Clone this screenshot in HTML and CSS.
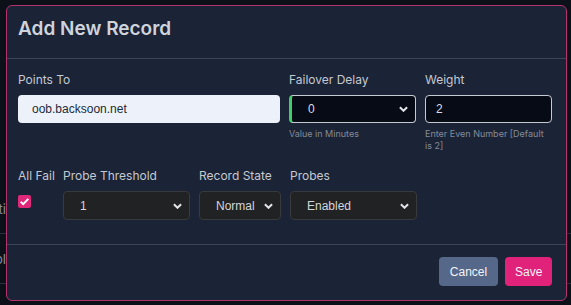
FILE: index.html
```html
<!DOCTYPE html>
<html lang="en">
<head>
    <meta charset="UTF-8">
    <title>Add New Record</title>
    <link rel="stylesheet" href="styles.css">
</head>
<body>
    <div class="page">
        <div class="bg-row"><span class="bg-edge">Multi</span></div>
        <div class="bg-row"><span class="bg-edge">Pool</span></div>
        <div class="bg-row bg-last"><span class="bg-cell">TRAFFIC CONTROLLER</span><span class="bg-cell bg-right">Enabled</span></div>
    </div>

    <div class="modal">
        <div class="modal-header">
            <h2>Add New Record</h2>
        </div>

        <div class="modal-body">
            <div class="form-row">
                <div class="field field-wide">
                    <label>Points To</label>
                    <input class="input input-light" type="text" value="oob.backsoon.net">
                </div>
                <div class="field field-md">
                    <label>Failover Delay</label>
                    <div class="select select-dark select-ok">
                        <span>0</span>
                        <svg class="chev" viewBox="0 0 10 6"><path d="M1 1l4 4 4-4"/></svg>
                    </div>
                    <small>Value in Minutes</small>
                </div>
                <div class="field field-md">
                    <label>Weight</label>
                    <input class="input input-dark" type="text" value="2">
                    <small>Enter Even Number [Default is 2]</small>
                </div>
            </div>

            <div class="form-row row-two">
                <div class="field field-check">
                    <label>All Fail</label>
                    <span class="checkbox">
                        <svg viewBox="0 0 12 12"><path d="M2.5 6.2l2.3 2.2 4.7-4.8"/></svg>
                    </span>
                </div>
                <div class="field field-md">
                    <label>Probe Threshold</label>
                    <div class="select select-gray">
                        <span>1</span>
                        <svg class="chev" viewBox="0 0 10 6"><path d="M1 1l4 4 4-4"/></svg>
                    </div>
                </div>
                <div class="field field-sm">
                    <label>Record State</label>
                    <div class="select select-gray">
                        <span>Normal</span>
                        <svg class="chev" viewBox="0 0 10 6"><path d="M1 1l4 4 4-4"/></svg>
                    </div>
                </div>
                <div class="field field-md">
                    <label>Probes</label>
                    <div class="select select-gray">
                        <span>Enabled</span>
                        <svg class="chev" viewBox="0 0 10 6"><path d="M1 1l4 4 4-4"/></svg>
                    </div>
                </div>
            </div>
        </div>

        <div class="modal-footer">
            <button class="btn btn-cancel">Cancel</button>
            <button class="btn btn-save">Save</button>
        </div>
    </div>
</body>
</html>
```

FILE: styles.css
```css
* {
    box-sizing: border-box;
}
body {
    margin: 0;
    background: #0c1019;
    font-family: 'Inter', 'Liberation Sans', sans-serif;
    width: 571px;
    height: 305px;
    overflow: hidden;
    position: relative;
}
.page {
    height: 305px;
    overflow: hidden;
    padding-top: 184px;
    color: #8a90a0;
    font-size: 13px;
}
.bg-row {
    display: flex;
    height: 50px;
    align-items: center;
    border-bottom: 1px solid #2a3040;
}
.bg-last {
    height: 36px;
    align-items: flex-end;
    border-bottom: none;
}
.bg-edge {
    width: 6px;
    overflow: hidden;
    white-space: nowrap;
    direction: rtl;
    line-height: 14px;
}
.bg-cell {
    width: 365px;
    line-height: 14px;
}
.bg-right {
    border-left: 1px solid #2a3040;
    padding-left: 12px;
}
.modal {
    position: absolute;
    left: 6px;
    top: 5px;
    width: 561px;
    height: 296px;
    background: #1b2336;
    border: 1px solid #b5336d;
    border-radius: 6px;
    display: flex;
    flex-direction: column;
}
.modal-header {
    height: 53px;
    display: flex;
    align-items: center;
    padding: 0 11px 7px;
    border-bottom: 1px solid #3c4558;
}
.modal-header h2 {
    margin: 0;
    font-size: 19px;
    font-weight: 600;
    color: #cfd3db;
}
.modal-body {
    flex: 1;
    padding: 13px 11px 0;
    border-bottom: 1px solid #3c4558;
}
.form-row {
    display: flex;
    gap: 9px;
}
.row-two {
    margin-top: 16px;
}
.field {
    display: flex;
    flex-direction: column;
}
.field label {
    font-size: 12px;
    color: #c4c9d2;
    margin-bottom: 8px;
    white-space: nowrap;
}
.field small {
    font-size: 9px;
    color: #848b99;
    margin-top: 5px;
    line-height: 12px;
}
.field-wide { width: 262px; }
.field-md { width: 127px; }
.field-sm { width: 82px; }
.field-check { width: 36px; }
.input {
    height: 28px;
    border-radius: 4px;
    font-family: 'Liberation Sans', Arial, sans-serif;
    font-size: 12px;
    outline: none;
}
.input-light {
    background: #edf2fa;
    border: none;
    color: #222a38;
    padding: 0 14px;
}
.input-dark {
    background: #070b16;
    border: 1px solid #c6cad2;
    color: #d8dce4;
    padding: 0 10px;
}
.select {
    height: 29px;
    border-radius: 4px;
    display: flex;
    align-items: center;
    justify-content: space-between;
    font-family: 'Liberation Sans', Arial, sans-serif;
    font-size: 12px;
    padding: 0 7px 0 16px;
}
.select-dark {
    height: 28px;
    background: #070b16;
    border: 1px solid #c6cad2;
    color: #d8dce4;
}
.select-ok {
    border-left: 3px solid #3ecf6a;
}
.select-gray {
    background: #212224;
    border: 1px solid #38393c;
    color: #d4d6da;
}
.chev {
    width: 9px;
    height: 6px;
    fill: none;
    stroke: #e2e4e8;
    stroke-width: 2.2;
}
.checkbox {
    width: 13px;
    height: 13px;
    margin-top: 4px;
    background: #e0287a;
    border-radius: 2px;
    display: flex;
}
.checkbox svg {
    width: 13px;
    height: 13px;
    fill: none;
    stroke: #fff;
    stroke-width: 1.8;
}
.modal-footer {
    height: 55px;
    display: flex;
    align-items: center;
    justify-content: flex-end;
    gap: 7px;
    padding: 0 14px 2px;
}
.btn {
    height: 29px;
    border: none;
    border-radius: 4px;
    font-family: 'Liberation Sans', Arial, sans-serif;
    font-size: 12px;
    color: #f2f4f8;
    padding: 0 10px;
}
.btn-cancel {
    background: #56688a;
    width: 59px;
}
.btn-save {
    background: #e0227a;
    width: 47px;
}
```
